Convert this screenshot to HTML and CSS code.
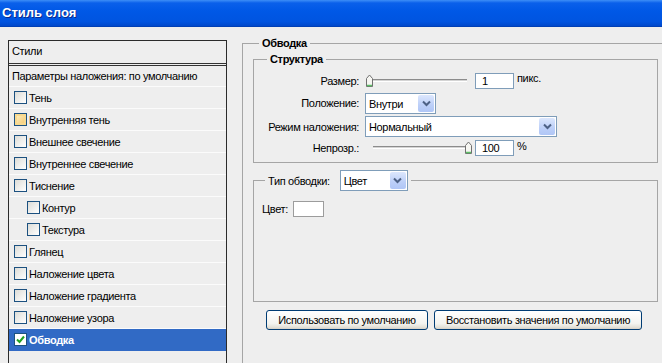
FILE: index.html
```html
<!DOCTYPE html>
<html lang="ru">
<head>
<meta charset="utf-8">
<title>Стиль слоя</title>
<link rel="stylesheet" href="styles.css">
</head>
<body>
<div class="window">
  <div class="titlebar">Стиль слоя</div>
  <div class="main">
    <div class="styles-panel">
      <div class="panel-head">Стили</div>
      <div class="row row-blend">Параметры наложения: по умолчанию</div>
      <div class="row"><span class="cb"></span>Тень</div>
      <div class="row"><span class="cb cb-hover"></span>Внутренняя тень</div>
      <div class="row"><span class="cb"></span>Внешнее свечение</div>
      <div class="row"><span class="cb"></span>Внутреннее свечение</div>
      <div class="row"><span class="cb"></span>Тиснение</div>
      <div class="row row-sub"><span class="cb"></span>Контур</div>
      <div class="row row-sub"><span class="cb"></span>Текстура</div>
      <div class="row"><span class="cb"></span>Глянец</div>
      <div class="row"><span class="cb"></span>Наложение цвета</div>
      <div class="row"><span class="cb"></span>Наложение градиента</div>
      <div class="row"><span class="cb"></span>Наложение узора</div>
      <div class="row row-selected"><span class="cb cb-checked"><svg width="9" height="9" viewBox="0 0 9 9"><path d="M1 4.5 L3.5 7 L8 1.5" fill="none" stroke="#21a121" stroke-width="2"/></svg></span>Обводка</div>
      <div class="row row-empty"></div>
    </div>

    <div class="settings">
      <fieldset class="group-outer">
        <legend class="legend-bold">Обводка</legend>
        <fieldset class="group-struct">
          <legend class="legend-bold">Структура</legend>
          <div class="form-grid">
            <div class="lbl">Размер:</div>
            <div class="ctl">
              <div class="slider">
                <div class="track"></div>
                <svg class="thumb thumb-left" width="9" height="13" viewBox="0 0 9 13"><path d="M1.5 12.5 V4.5 L4.5 1 L7.5 4.5 V12.5 Z" fill="#f6f6f2" stroke="#707070"/><path d="M2 11.5 H7" stroke="#5cbf66" stroke-width="1.5"/></svg>
              </div>
              <div class="num">1</div>
              <span class="unit">пикс.</span>
            </div>

            <div class="lbl">Положение:</div>
            <div class="ctl">
              <div class="select select-pos"><span class="sel-text">Внутри</span><span class="sel-btn"><svg width="9" height="7" viewBox="0 0 9 7"><path d="M1 1.5 L4.5 5 L8 1.5" fill="none" stroke="#4d6185" stroke-width="2"/></svg></span></div>
            </div>

            <div class="lbl">Режим наложения:</div>
            <div class="ctl">
              <div class="select select-mode"><span class="sel-text">Нормальный</span><span class="sel-btn"><svg width="9" height="7" viewBox="0 0 9 7"><path d="M1 1.5 L4.5 5 L8 1.5" fill="none" stroke="#4d6185" stroke-width="2"/></svg></span></div>
            </div>

            <div class="lbl">Непрозр.:</div>
            <div class="ctl">
              <div class="slider">
                <div class="track"></div>
                <svg class="thumb thumb-right" width="9" height="13" viewBox="0 0 9 13"><path d="M1.5 12.5 V4.5 L4.5 1 L7.5 4.5 V12.5 Z" fill="#f6f6f2" stroke="#707070"/><path d="M2 11.5 H7" stroke="#5cbf66" stroke-width="1.5"/></svg>
              </div>
              <div class="num">100</div>
              <span class="unit">%</span>
            </div>
          </div>
        </fieldset>

        <fieldset class="group-type">
          <legend class="legend-type">
            <span class="type-lbl">Тип обводки:</span>
            <span class="select select-type"><span class="sel-text">Цвет</span><span class="sel-btn"><svg width="9" height="7" viewBox="0 0 9 7"><path d="M1 1.5 L4.5 5 L8 1.5" fill="none" stroke="#4d6185" stroke-width="2"/></svg></span></span>
          </legend>
          <div class="type-body">
            <span>Цвет:</span>
            <span class="swatch"></span>
          </div>
        </fieldset>

        <div class="buttons">
          <button class="btn btn-use">Использовать по умолчанию</button>
          <button class="btn btn-reset">Восстановить значения по умолчанию</button>
        </div>
      </fieldset>
    </div>
  </div>
</div>
</body>
</html>
```

FILE: styles.css
```css
* { box-sizing: border-box; }

html, body {
  margin: 0;
  padding: 0;
  height: 363px;
  overflow: hidden;
  background: #eeeeee;
  font-family: "Liberation Sans", Arial, sans-serif;
  font-size: 11px;
  letter-spacing: -0.35px;
  color: #000;
}

.window {
  height: 363px;
  display: flex;
  flex-direction: column;
}

.titlebar {
  height: 27px;
  flex: none;
  padding: 0 0 0 2px;
  line-height: 26px;
  font-family: "Liberation Sans", Arial, sans-serif;
  font-weight: bold;
  font-size: 13px;
  letter-spacing: 0;
  color: #fff;
  text-shadow: 1px 1px 0 #0a2a8c;
  background: linear-gradient(#3d8ef7 0, #0a60ea 3px, #0058e6 40%, #0054e0 80%, #0049cc 95%, #003aa8 100%);
}

.main {
  flex: 1;
  display: flex;
  align-items: flex-start;
}

/* left panel */
.styles-panel {
  margin: 13px 0 0 8px;
  width: 219px;
  height: 340px;
  border: 1px solid #2b2b2b;
  border-bottom: none;
  flex: none;
}

.panel-head {
  height: 25px;
  line-height: 21px;
  padding-left: 3px;
  border-bottom: 3px double #333;
}

.row {
  height: 22px;
  display: flex;
  align-items: center;
  padding-left: 5px;
  border-bottom: 1px solid #fbfbfb;
}

.row-blend {
  height: 21px;
  padding-left: 3px;
}

.row-sub {
  padding-left: 18px;
}

.row-selected {
  background: #316ac5;
  color: #fff;
  font-weight: bold;
  border-bottom-color: #316ac5;
}

.row-empty {
  border-bottom: none;
}

.cb {
  width: 13px;
  height: 13px;
  margin-right: 2px;
  border: 1px solid #1c5180;
  background: linear-gradient(135deg, #dcdcd7, #ffffff);
  display: inline-flex;
  align-items: center;
  justify-content: center;
  flex: none;
}

.cb-hover {
  background: linear-gradient(135deg, #fdf3c8, #f5c56a);
  box-shadow: inset 0 0 0 2px #f8d98f;
}

.cb-checked {
  background: #fff;
}

/* right side */
.settings {
  flex: 1;
  margin: 10px 0 0 15px;
}

.group-outer {
  margin: 0;
  padding: 0 0 40px 10px;
  border: none;
  border-top: 1px solid #a5a5a5;
  border-left: 1px solid #a5a5a5;
  min-width: 0;
}

.legend-bold {
  font-weight: bold;
  padding: 0 3px;
  margin-left: 6px;
  line-height: 13px;
}

.group-struct {
  width: 405px;
  margin: 3px 0 0 0;
  padding: 4px 0 5px 0;
  border: 1px solid #a5a5a5;
}

.group-struct > .legend-bold {
  margin-left: 13px;
}

.form-grid {
  display: grid;
  grid-template-columns: 105px auto;
  grid-template-rows: 21px 24px 23px 19px;
  column-gap: 6px;
}

.lbl {
  text-align: right;
  align-self: center;
}

.ctl {
  display: flex;
  align-items: center;
}

.slider {
  position: relative;
  width: 108px;
  height: 13px;
  margin-left: 0;
  display: flex;
  align-items: center;
}

.track {
  flex: 1;
  margin: 0 6px 0 8px;
  height: 3px;
  border-top: 1px solid #8c8c8c;
  border-bottom: 1px solid #ffffff;
  background: #d4d4d4;
}

.thumb {
  position: absolute;
  top: 0;
}

.thumb-left { left: 0; }
.thumb-right { right: 0; }

.num {
  width: 39px;
  height: 16px;
  margin-left: 2px;
  padding-left: 6px;
  line-height: 14px;
  border: 1px solid #7f9db9;
  background: #fff;
}

.unit {
  margin-left: 3px;
  align-self: flex-start;
  margin-top: 2px;
}

.select {
  display: flex;
  align-items: stretch;
  height: 21px;
  border: 1px solid #7f9db9;
  background: #fff;
}

.select-pos { width: 71px; }
.select-mode { width: 192px; }
.select-type { width: 68px; display: inline-flex; vertical-align: middle; }

.sel-text {
  flex: 1;
  padding-left: 3px;
  line-height: 20px;
}

.sel-btn {
  width: 16px;
  margin: 1px;
  border-radius: 2px;
  background: linear-gradient(#dce7fd, #bccff8 60%, #b0c6f6);
  display: flex;
  align-items: center;
  justify-content: center;
}

.group-type {
  width: 405px;
  margin: 7px 0 0 0;
  padding: 10px 8px 0;
  border: 1px solid #a5a5a5;
}

.legend-type {
  margin-left: 3px;
  padding: 0 3px;
  display: flex;
  align-items: center;
  gap: 10px;
}

.type-body {
  height: 100px;
  display: flex;
  align-items: flex-start;
  gap: 5px;
}

.type-body span:first-child {
  margin-top: 2px;
}

.swatch {
  width: 31px;
  height: 16px;
  border: 1px solid #9c9c9c;
  background: #fff;
}

.buttons {
  display: flex;
  gap: 6px;
  margin-top: 8px;
  padding-left: 13px;
}

.btn {
  height: 20px;
  padding: 0;
  font-family: "Liberation Sans", Arial, sans-serif;
  font-size: 11px;
  letter-spacing: -0.35px;
  color: #000;
  border: 1px solid #003c74;
  border-radius: 3px;
  background: linear-gradient(#ffffff, #f3f3ef 70%, #e3e1d8 90%, #d6d0c5);
}

.btn-use { width: 162px; }
.btn-reset { width: 208px; }
```
